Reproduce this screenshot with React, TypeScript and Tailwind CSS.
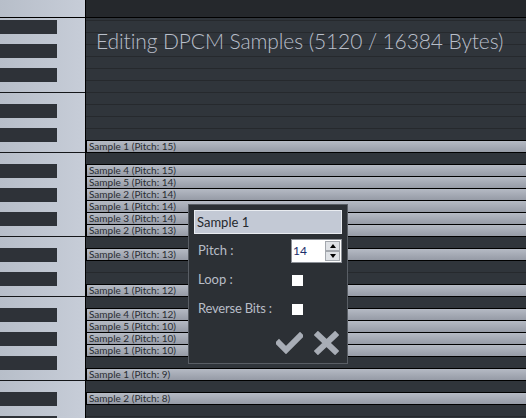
import { clsx as cn } from 'clsx';

const font = "font-['Lato','Open_Sans',sans-serif]";

// row index -> note label, rows start at y=20 and are 12px tall
const notes: Record<number, string> = {
  10: 'Sample 1 (Pitch: 15)',
  12: 'Sample 4 (Pitch: 15)',
  13: 'Sample 5 (Pitch: 14)',
  14: 'Sample 2 (Pitch: 14)',
  15: 'Sample 1 (Pitch: 14)',
  16: 'Sample 3 (Pitch: 14)',
  17: 'Sample 2 (Pitch: 13)',
  19: 'Sample 3 (Pitch: 13)',
  22: 'Sample 1 (Pitch: 12)',
  24: 'Sample 4 (Pitch: 12)',
  25: 'Sample 5 (Pitch: 10)',
  26: 'Sample 2 (Pitch: 10)',
  27: 'Sample 1 (Pitch: 10)',
  29: 'Sample 1 (Pitch: 9)',
  31: 'Sample 2 (Pitch: 8)',
};

const ROWS = 34;

function GridRow({ index }: { index: number }) {
  const label = notes[index];
  const dark = !!label || !!notes[index - 1];
  return (
    <div className={cn('h-[12px] shrink-0 border-t', dark ? 'border-black' : 'border-[#26292d]')}>
      {label && (
        <div className="h-[11px] border-l border-black bg-gradient-to-b from-[#b5bac4] to-[#969ba6] pl-[2px] text-[10px] leading-[11px] text-[#2a2d32] whitespace-nowrap">
          {label}
        </div>
      )}
    </div>
  );
}

function BlackKey() {
  return (
    <div className="h-[14px] shrink-0 flex">
      <div className="w-[57px] bg-[#2e3238]" />
    </div>
  );
}

function White({ h }: { h: string }) {
  return <div className={cn('shrink-0', h)} />;
}

function Octave() {
  return (
    <>
      <BlackKey />
      <White h="h-[10px]" />
      <BlackKey />
      <White h="h-[10px]" />
      <BlackKey />
      <White h="h-[10px]" />
      <div className="h-px shrink-0 bg-[#15171a]" />
      <White h="h-[11px]" />
      <BlackKey />
      <White h="h-[10px]" />
      <BlackKey />
      <White h="h-[10px]" />
      <div className="h-px shrink-0 bg-[#15171a]" />
      <White h="h-[11px]" />
    </>
  );
}

function Piano() {
  return (
    <div className="w-[86px] shrink-0 border-r border-black flex flex-col overflow-hidden bg-gradient-to-r from-[#b7bec9] to-[#c7cdd8]">
      <div className="h-[18px] shrink-0 border-b border-black" />
      <White h="h-[2px]" />
      <Octave />
      <Octave />
      <Octave />
    </div>
  );
}

function Spinner() {
  return (
    <div className="flex flex-col w-[15px] mr-px">
      <div className="h-[10px] border border-[#a3a7ad] bg-[#dfe2e6] flex items-center justify-center">
        <div className="w-0 h-0 border-l-[3px] border-r-[3px] border-b-[4px] border-l-transparent border-r-transparent border-b-black" />
      </div>
      <div className="h-[10px] border border-[#a3a7ad] bg-[#dfe2e6] flex items-center justify-center">
        <div className="w-0 h-0 border-l-[3px] border-r-[3px] border-t-[4px] border-l-transparent border-r-transparent border-t-black" />
      </div>
    </div>
  );
}

function Dialog() {
  return (
    <div className="absolute left-[188px] top-[204px] w-[160px] h-[160px] bg-[#2c3035] border border-[#595e65] px-[5px] pt-[5px] flex flex-col text-[13px] text-[#b8bdc7]">
      <div className="h-[24px] border border-[#e9ecf1] bg-[#c3c9d5] text-[#25282d] pl-[2px] leading-[22px]">Sample 1</div>
      <div className="mt-[5px] h-[24px] flex items-center">
        <div className="pl-[4px]">Pitch :</div>
        <div className="ml-auto w-[51px] h-[24px] border border-[#8d9198] bg-white flex items-center">
          <span className="pl-[1px] text-[12px] text-[#1b2e6b] flex-1">14</span>
          <Spinner />
        </div>
      </div>
      <div className="mt-[5px] h-[24px] flex items-center">
        <div className="w-[98px] pl-[4px]">Loop :</div>
        <div className="w-[11px] h-[11px] bg-white" />
      </div>
      <div className="mt-[5px] h-[24px] flex items-center">
        <div className="w-[98px] pl-[4px] whitespace-nowrap tracking-[-0.2px]">Reverse Bits :</div>
        <div className="w-[11px] h-[11px] bg-white" />
      </div>
      <div className="mt-[10px] h-[24px] flex items-center justify-end gap-[11px] pr-[3px]">
        <svg width="27" height="22" viewBox="0 0 27 22">
          <path d="M3 11 L10 18 L24 4" fill="none" stroke="#a8adb6" strokeWidth="6" strokeLinecap="square" />
        </svg>
        <svg width="25" height="24" viewBox="0 0 25 24">
          <path d="M4 4 L21 20 M21 4 L4 20" fill="none" stroke="#a8adb6" strokeWidth="6" strokeLinecap="square" />
        </svg>
      </div>
    </div>
  );
}

export default function App() {
  return (
    <div className={cn('w-[526px] h-[418px] overflow-hidden flex relative bg-[#30353b]', font)}>
      <Piano />
      <div className="flex-1 flex flex-col overflow-hidden relative">
        <div className="h-[18px] shrink-0 bg-[#25282c] border-b border-black" />
        <div className="h-[2px] shrink-0" />
        {Array.from({ length: ROWS }, (_, i) => (
          <GridRow key={i} index={i} />
        ))}
        <div className="absolute left-[10px] top-[25px] text-[21px] font-light tracking-[-0.1px] text-[#b8bec9] whitespace-nowrap">
          Editing DPCM Samples (5120 / 16384 Bytes)
        </div>
      </div>
      <Dialog />
    </div>
  );
}
